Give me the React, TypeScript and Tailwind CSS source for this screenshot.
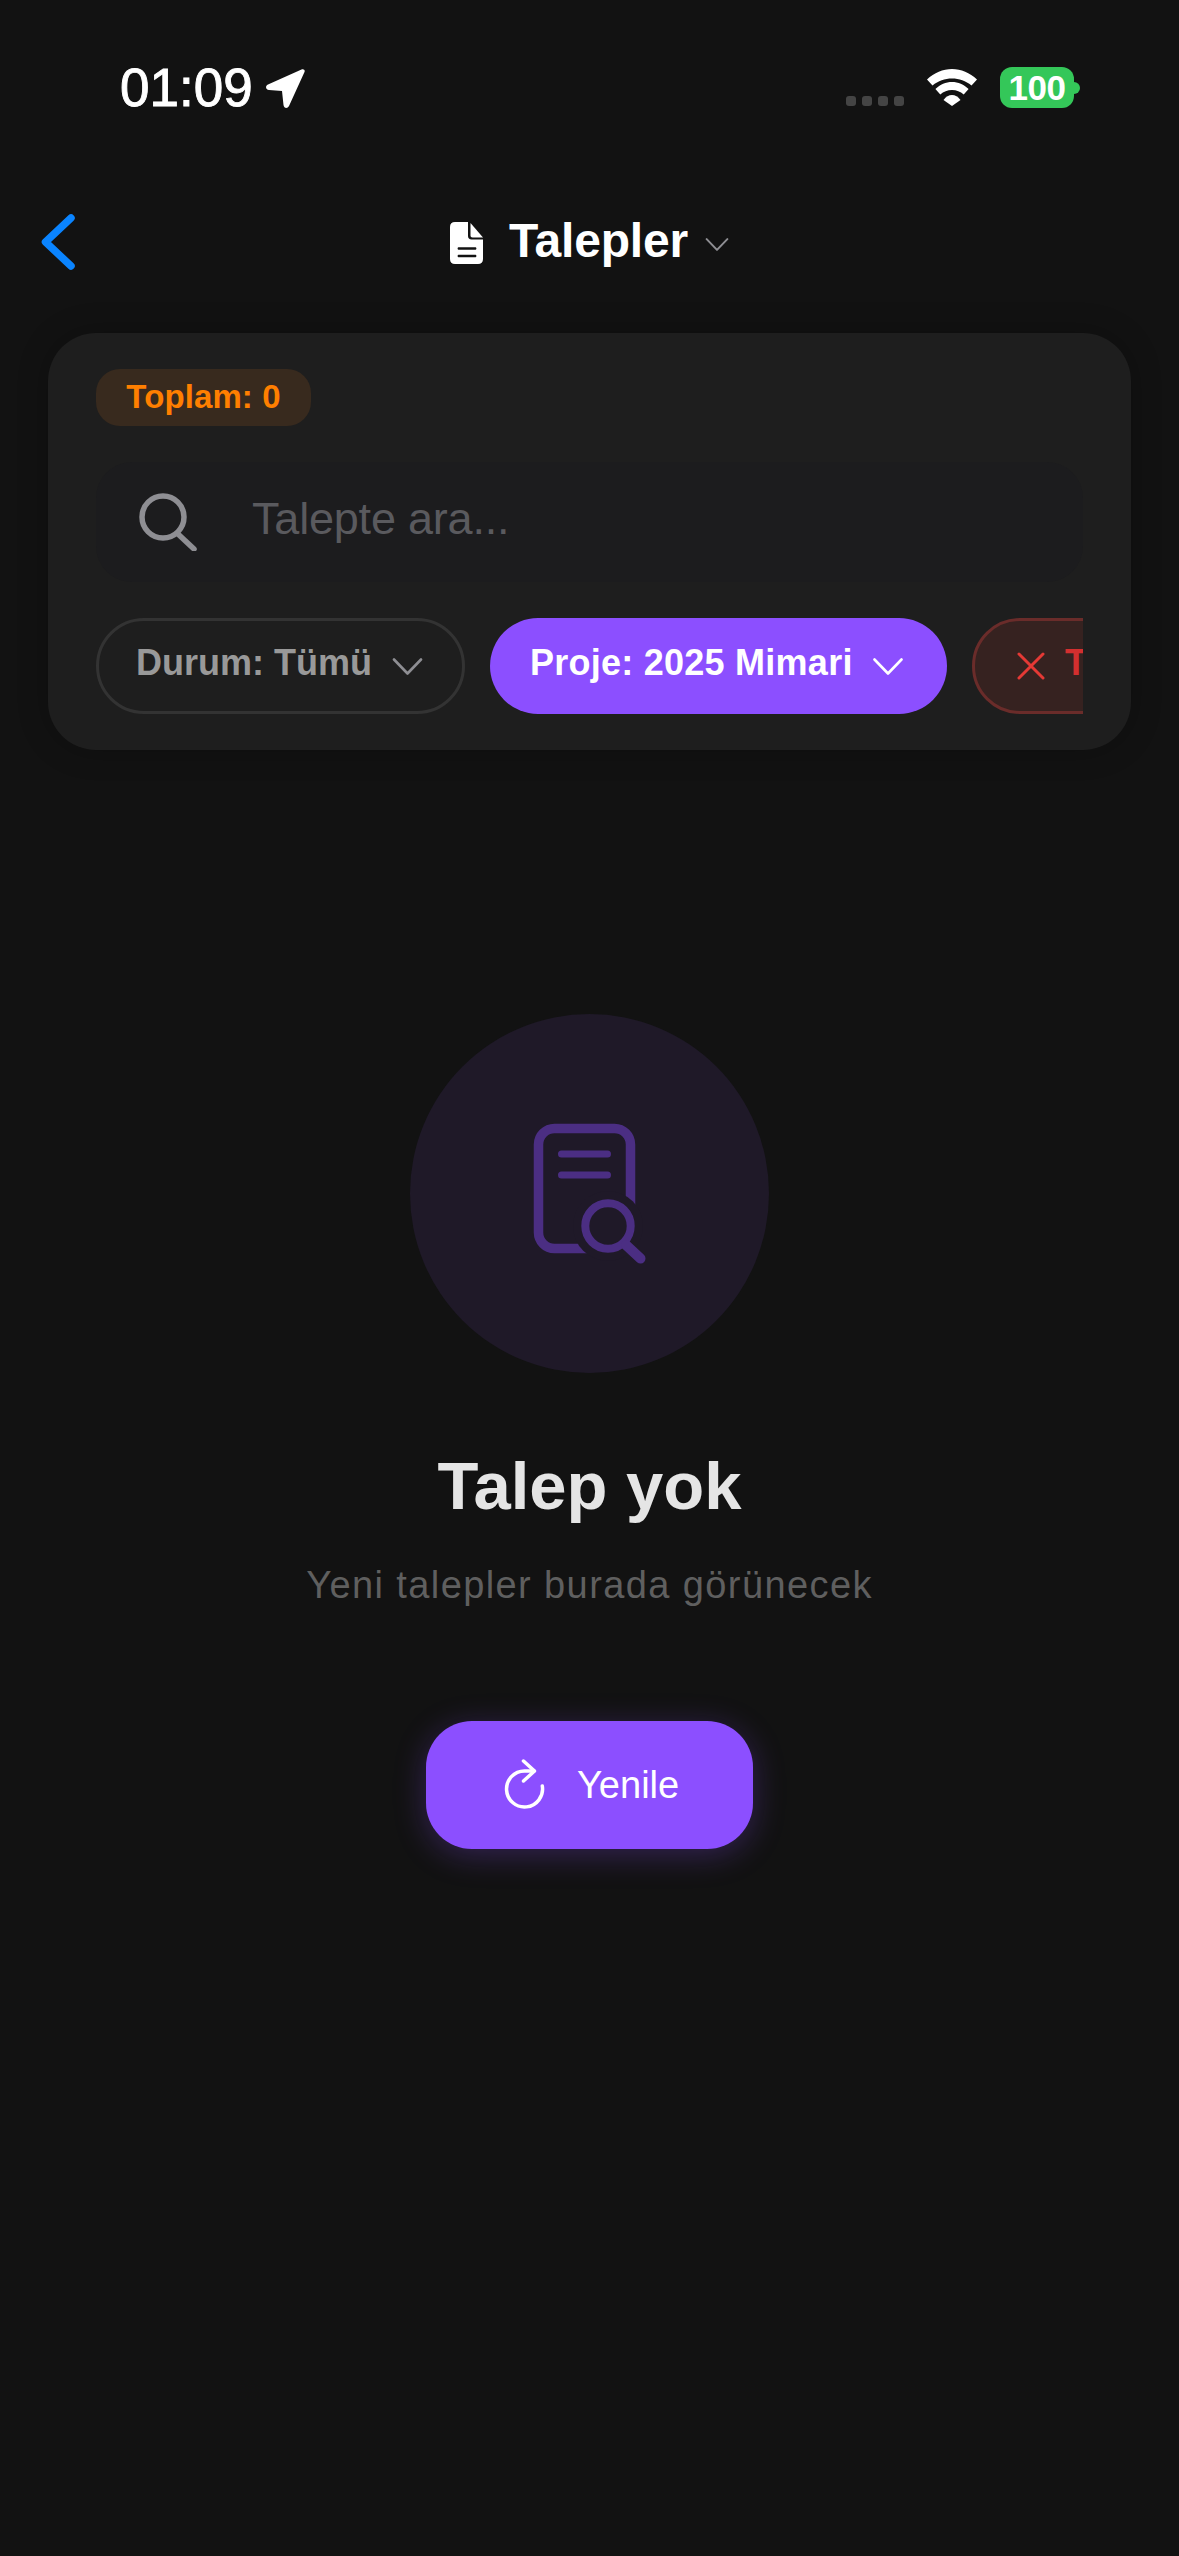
import React from 'react'

const ChevronDown = ({ className }: { className: string }) => (
  <svg viewBox="0 0 30 17" fill="none" stroke="currentColor" strokeWidth="2.6" strokeLinecap="round" strokeLinejoin="round" className={className}>
    <path d="M1.5 1.5 15 15.5 28.5 1.5" />
  </svg>
)

const StatusBar = () => (
  <div className="flex justify-between items-start h-[41px] mt-[67px] pl-[120px] pr-[99px]">
    <div className="flex items-start">
      <span className="text-[53px] leading-[41px] text-white [-webkit-text-stroke:0.9px_white]">01:09</span>
      <svg viewBox="0 0 39 39" className="w-[39px] h-[39px] ml-[13px] mt-[2px]" fill="#fff">
        <path d="M35.500 0.500 2 15.500c-3 1.500-2.500 5 1 5.500l13 1 1.500 14c.5 3.500 4 4 5.500 1L38.500 3c.8-2-1-3.500-3-2.500Z" />
      </svg>
    </div>
    <div className="flex items-start">
      <div className="flex gap-[6px] mt-[29px]">
        <div className="w-[10px] h-[10px] rounded-[3px] bg-[#444]" />
        <div className="w-[10px] h-[10px] rounded-[3px] bg-[#444]" />
        <div className="w-[10px] h-[10px] rounded-[3px] bg-[#444]" />
        <div className="w-[10px] h-[10px] rounded-[3px] bg-[#444]" />
      </div>
      <svg viewBox="0 0 50 37" className="w-[50px] h-[37px] ml-[23px] mt-[2px]" fill="#fff">
        <path d="M25 0C15.800 0 7.400 3.700 0 10.500l5.500 6C11.300 11.700 17.800 9.500 25 9.500s13.700 2.200 19.500 7L50 10.500C42.600 3.700 34.200 0 25 0Z" />
        <path d="M25 13c-6.200 0-11.800 2.500-16.600 7l4.900 5.500c3.300-2.800 7.200-4.500 11.700-4.500s8.400 1.700 11.700 4.500l4.900-5.500c-4.800-4.500-10.400-7-16.600-7Z" />
        <path d="M25 26c-3.200 0-6 1.800-8.500 5L25 37l8.500-6c-2.500-3.200-5.300-5-8.500-5Z" />
      </svg>
      <div className="flex items-center ml-[23px]">
        <div className="w-[74px] h-[41px] rounded-[12px] bg-[#34c759] flex items-center justify-center text-[35px] font-bold tracking-[-0.5px] leading-none text-white">
          100
        </div>
        <div className="w-[6px] h-[12px] rounded-r-[6px] bg-[#34c759]" />
      </div>
    </div>
  </div>
)

const NavBar = () => (
  <div className="grid grid-cols-[1fr_auto_1fr] items-center h-[56px] mt-[106px] pl-[41px] pr-[41px]">
    <svg viewBox="0 0 34 56" className="w-[34px] h-[56px]" fill="none" stroke="#0a84ff" strokeWidth="7.500" strokeLinecap="round" strokeLinejoin="round">
      <path d="M30 4 4.500 28 30 52" />
    </svg>
    <div className="flex items-center">
      <svg viewBox="0 0 33 42" className="w-[33px] h-[42px] mt-[2px]" fill="#fff">
        <path fillRule="evenodd" d="M5 0h13v14c0 2.200 1.300 3.500 3.500 3.500H33V37c0 3.200-1.800 5-5 5H5c-3.200 0-5-1.800-5-5V5c0-3.200 1.800-5 5-5ZM9 25.200c-.9 0-1.400.5-1.400 1.300S8.100 27.800 9 27.800h16c.9 0 1.400-.5 1.400-1.300s-.5-1.300-1.400-1.300H9Zm0 7.500c-.9 0-1.400.5-1.400 1.300s.5 1.300 1.400 1.300h16c.9 0 1.400-.5 1.400-1.300s-.5-1.300-1.400-1.300H9Z" />
        <path d="M20.500 1 33 15.500H22.500c-1.300 0-2-.7-2-2V1Z" />
      </svg>
      <span className="ml-[26px] pb-[3px] text-[48px] leading-[53px] font-bold tracking-[-0.2px] text-white">Talepler</span>
      <ChevronDown className="w-[24px] h-[13px] ml-[17px] mt-[5px] text-[#8e8e93]" />
    </div>
    <div />
  </div>
)

const FilterCard = () => (
  <div className="mt-[63px] ml-[48px] w-[1083px] h-[417px] rounded-[48px] bg-[#1e1e1e] pt-[36px] px-[48px] shadow-[0_0_30px_rgba(0,0,0,0.25)]">
    <div className="w-[215px] h-[57px] pb-[2px] rounded-[24px] bg-[#382a1e] flex items-center justify-center text-[33px] font-bold tracking-[0.1px] text-[#ff7f00]">
      Toplam: 0
    </div>
    <div className="mt-[36px] h-[120px] rounded-[36px] bg-[#1c1c1e] flex items-center pl-[43px]">
      <svg viewBox="0 0 58 58" className="w-[58px] h-[58px]" fill="none" stroke="#8e8e93" strokeWidth="5.500" strokeLinecap="round">
        <circle cx="24" cy="24" r="21" />
        <path d="M39 41 55 56" />
      </svg>
      <span className="ml-[55px] pb-[6px] text-[45px] tracking-[-0.2px] text-[#5a5a5e]">Talepte ara...</span>
    </div>
    <div className="mt-[36px] flex gap-[25px] overflow-hidden">
      <div className="shrink-0 w-[369px] h-[96px] rounded-full border-[3px] border-[#333] flex items-center pl-[37px] text-[36px] font-bold text-[#999]">
        <span className="pb-[6px]">Durum: Tümü</span>
        <ChevronDown className="w-[31px] h-[17px] ml-[20px] text-[#8e8e93]" />
      </div>
      <div className="shrink-0 w-[457px] h-[96px] rounded-full bg-[#8c4fff] flex items-center pl-[40px] text-[36px] font-bold tracking-[0.25px] text-white">
        <span className="pb-[6px]">Proje: 2025 Mimari</span>
        <ChevronDown className="w-[30px] h-[17px] ml-[20px] text-white" />
      </div>
      <div className="shrink-0 w-[220px] h-[96px] rounded-full border-[3px] border-[#6a2c2a] bg-[#362220] flex items-center pl-[42px] text-[36px] font-bold text-[#d32f2f]">
        <svg viewBox="0 0 28 28" className="w-[28px] h-[28px] shrink-0" fill="none" stroke="#e53935" strokeWidth="3" strokeLinecap="round">
          <path d="M2 2 26 26M26 2 2 26" />
        </svg>
        <span className="ml-[20px] pb-[6px]">Temizle</span>
      </div>
    </div>
  </div>
)

const EmptyState = () => (
  <div className="mt-[264px] flex flex-col items-center">
    <div className="w-[359px] h-[359px] rounded-full bg-[#1f1928] flex items-center justify-center">
      <svg viewBox="0 0 359 359" className="w-[359px] h-[359px]" fill="none" stroke="#4b2e83" strokeLinecap="round">
        <rect x="128.500" y="114.500" width="92" height="120" rx="16" strokeWidth="9.500" />
        <circle cx="198" cy="212" r="35" fill="#1f1928" stroke="none" />
        <path d="M151.500 140h46M151.500 161h46" strokeWidth="7" />
        <circle cx="198" cy="212" r="22.700" strokeWidth="8" />
        <path d="M216 231 230.500 244.500" strokeWidth="10" />
      </svg>
    </div>
    <h2 className="mt-[69px] text-[67px] leading-[88px] font-bold text-[#e5e5e5]">Talep yok</h2>
    <p className="mt-[31px] text-[38px] leading-[48px] tracking-[1.4px] text-[#5f5f5f]">Yeni talepler burada görünecek</p>
    <button className="mt-[112px] w-[327px] h-[128px] rounded-[46px] bg-[#8c4fff] flex items-center pl-[78px] text-[38px] text-white shadow-[0_6px_32px_rgba(140,79,255,0.28)]">
      <svg viewBox="0 0 42 52" className="w-[42px] h-[52px]" fill="none" stroke="#fff" strokeWidth="3.500" strokeLinecap="round" strokeLinejoin="round">
        <path d="M38.300 27A18 18 0 1 1 20.500 12L30 12" />
        <path d="M19.500 2 30.500 12 19.500 22" />
      </svg>
      <span className="ml-[31px]">Yenile</span>
    </button>
  </div>
)

export default function App() {
  return (
    <div className="w-[1179px] h-[2556px] overflow-hidden bg-[#121212] font-['Liberation_Sans',Arial,sans-serif] flex flex-col">
      <StatusBar />
      <NavBar />
      <FilterCard />
      <EmptyState />
    </div>
  )
}
